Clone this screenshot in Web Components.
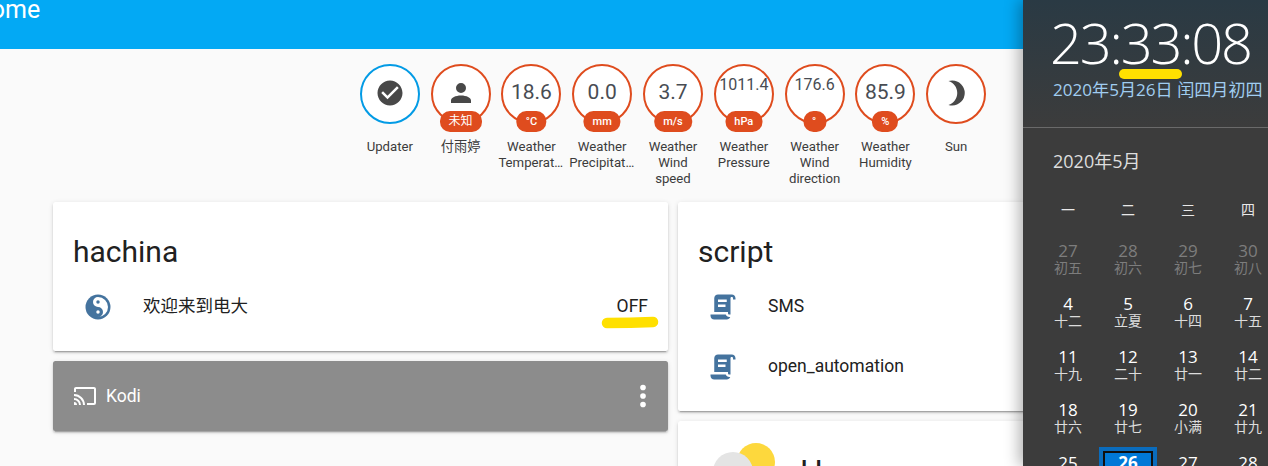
<!DOCTYPE html>
<html lang="zh">
<head>
<meta charset="utf-8">
<title>Home</title>
<style>
html,body{margin:0;padding:0;height:466px;overflow:hidden;background:#fafafa}
</style>
</head>
<body>
<ha-shell>
  <ha-header slot="main">Home</ha-header>
  <ha-badges slot="main">
    <ha-badge color="#039be5" icon="check" label="Updater"></ha-badge>
    <ha-badge icon="account" unit="未知" label="付雨婷"></ha-badge>
    <ha-badge value="18.6" unit="°C" label="Weather Temperature"></ha-badge>
    <ha-badge value="0.0" unit="mm" label="Weather Precipitation"></ha-badge>
    <ha-badge value="3.7" unit="m/s" label="Weather Wind speed"></ha-badge>
    <ha-badge value="1011.4" small unit="hPa" label="Weather Pressure"></ha-badge>
    <ha-badge value="176.6" small unit="°" label="Weather Wind direction"></ha-badge>
    <ha-badge value="85.9" unit="%" label="Weather Humidity"></ha-badge>
    <ha-badge icon="moon" label="Sun"></ha-badge>
  </ha-badges>
  <ha-columns slot="main">
    <div class="col">
      <ha-card heading="hachina">
        <ha-row icon="yin" state="OFF" lift>欢迎来到电大</ha-row>
      </ha-card>
      <ha-media>Kodi</ha-media>
    </div>
    <div class="col">
      <ha-card heading="script">
        <ha-row icon="script">SMS</ha-row>
        <ha-row icon="script">open_automation</ha-row>
      </ha-card>
      <ha-weather>H</ha-weather>
    </div>
  </ha-columns>
  <win-flyout slot="flyout"></win-flyout>
</ha-shell>
<script>
const ICONS={
  check:'M12 2C6.5 2 2 6.5 2 12S6.5 22 12 22 22 17.5 22 12 17.5 2 12 2M10 17L5 12L6.41 10.59L10 14.17L17.59 6.58L19 8L10 17Z',
  account:'M12,4A4,4 0 0,1 16,8A4,4 0 0,1 12,12A4,4 0 0,1 8,8A4,4 0 0,1 12,4M12,14C16.42,14 20,15.79 20,18V20H4V18C4,15.79 7.58,14 12,14Z',
  moon:'M9,2C7.95,2 6.95,2.16 6,2.46C10.06,3.73 13,7.5 13,12C13,16.5 10.06,20.27 6,21.54C6.95,21.84 7.95,22 9,22A10,10 0 0,0 19,12A10,10 0 0,0 9,2Z',
  script:'M17.8,20C17.4,21.2 16.3,22 15,22H5C3.3,22 2,20.7 2,19V18H5L14.2,18C14.6,19.2 15.7,20 17,20H17.8M19,2C20.7,2 22,3.3 22,5V6H20V5C20,4.4 19.6,4 19,4C18.4,4 18,4.4 18,5V18H17C16.4,18 16,17.6 16,17V16H5V5C5,3.3 6.3,2 8,2H19M8,6V8H15V6H8M8,10V12H14V10H8Z',
  cast:'M1,10V12A9,9 0 0,1 10,21H12C12,14.92 7.07,10 1,10M1,14V16A5,5 0 0,1 6,21H8A7,7 0 0,0 1,14M1,18V21H4A3,3 0 0,0 1,18M21,3H3C1.89,3 1,3.89 1,5V8H3V5H21V19H14V21H21A2,2 0 0,0 23,19V5C23,3.89 22.1,3 21,3Z',
  dots:'M12,16A2,2 0 0,1 14,18A2,2 0 0,1 12,20A2,2 0 0,1 10,18A2,2 0 0,1 12,16M12,10A2,2 0 0,1 14,12A2,2 0 0,1 12,14A2,2 0 0,1 10,12A2,2 0 0,1 12,10M12,4A2,2 0 0,1 14,6A2,2 0 0,1 12,8A2,2 0 0,1 10,6A2,2 0 0,1 12,4Z'
};
const FONT='Roboto,"Noto Sans CJK SC",sans-serif';
const FLY='"Open Sans","Noto Sans CJK SC",sans-serif';
const icon=(n,s,c)=>n==='yin'
 ?`<svg width="${s}" height="${s}" viewBox="0 0 24 24"><circle cx="12" cy="12" r="10" fill="${c}"/><path fill="#fff" d="M12 4A8 8 0 0 1 12 20A4 4 0 0 0 12 12A4 4 0 0 1 12 4Z"/><circle cx="12" cy="8" r="1.4" fill="${c}"/><circle cx="12" cy="16" r="1.4" fill="#fff"/></svg>`
 :`<svg width="${s}" height="${s}" viewBox="0 0 24 24"><path fill="${c}" d="${ICONS[n]}"/></svg>`;
class Base extends HTMLElement{
  constructor(){super();this.attachShadow({mode:'open'});}
}
customElements.define('ha-shell',class extends Base{
  connectedCallback(){this.shadowRoot.innerHTML=`<style>
    :host{display:block;position:relative;width:1268px;height:466px;overflow:hidden;font-family:${FONT};background:#fafafa}
    .page{width:1346px}
    </style><div class="page"><slot name="main"></slot></div><slot name="flyout"></slot>`;}
});
customElements.define('ha-header',class extends Base{
  connectedCallback(){this.shadowRoot.innerHTML=`<style>
    :host{display:block;height:49px;background:#03a9f4;color:#fff;overflow:hidden}
    div{margin-left:-27px;font-size:25px;line-height:20px;font-weight:400}
    </style><div><slot></slot></div>`;}
});
customElements.define('ha-badges',class extends Base{
  connectedCallback(){this.shadowRoot.innerHTML=`<style>
    :host{display:flex;justify-content:center;box-sizing:border-box;height:153px;padding-top:15px}
    </style><slot></slot>`;}
});
customElements.define('ha-badge',class extends Base{
  connectedCallback(){
    const c=this.getAttribute('color')||'#df4c1e';
    const ic=this.getAttribute('icon'),v=this.getAttribute('value'),u=this.getAttribute('unit'),l=this.getAttribute('label');
    const small=this.hasAttribute('small');
    const cjk=u&&/[\u4e00-\u9fff]/.test(u);
    this.shadowRoot.innerHTML=`<style>
    :host{display:flex;flex-direction:column;align-items:center;width:70.8px;flex:none}
    .c{position:relative;box-sizing:border-box;width:60px;height:60px;border:2.5px solid ${c};border-radius:50%;display:flex;align-items:center;justify-content:center;color:#484c53;background:#fff}
    .v{font-size:21px;line-height:1;margin-top:-4px}
    .v.s{font-size:16px;margin-top:-18px}
    svg{display:block;margin-top:-2px}
    .p{position:absolute;bottom:-10px;left:50%;transform:translateX(-50%);height:21px;line-height:21px;min-width:5px;padding:0 9px;border-radius:10px;background:${c};color:#fff;font-size:${cjk?12:11}px;font-weight:${cjk?400:500};white-space:nowrap}
    .l{margin-top:15px;width:66px;text-align:center;font-size:13.2px;line-height:16px;color:#3c3c3c;overflow:hidden;text-overflow:ellipsis}
    </style><div class="c">${ic?icon(ic,30,'#484848'):`<span class="v${small?' s':''}">${v}</span>`}${u?`<span class="p">${u}</span>`:''}</div><div class="l">${l}</div>`;
  }
});
customElements.define('ha-columns',class extends Base{
  connectedCallback(){this.shadowRoot.innerHTML=`<style>
    :host{display:grid;grid-template-columns:615px 615px;gap:10px;padding:0 53px}
    ::slotted(.col){display:flex;flex-direction:column;gap:10px;min-width:0}
    </style><slot></slot>`;}
});
const cardStyle=`background:#fff;border-radius:2.5px;box-shadow:0 2px 2px rgba(0,0,0,.14),0 1px 5px rgba(0,0,0,.12),0 3px 1px -2px rgba(0,0,0,.2);`;
customElements.define('ha-card',class extends Base{
  connectedCallback(){this.shadowRoot.innerHTML=`<style>
    :host{display:block;${cardStyle}padding-bottom:10px;color:#212121}
    h2{margin:0;box-sizing:border-box;height:79px;padding:30px 20px 0;font-size:30px;line-height:40px;font-weight:400;color:#212121}
    </style><h2>${this.getAttribute('heading')}</h2><slot></slot>`;}
});
customElements.define('hl-mark',class extends Base{
  connectedCallback(){
    const w=+this.getAttribute('w'),h=+this.getAttribute('h');
    this.shadowRoot.innerHTML=`<style>
    :host{display:block;position:absolute;left:var(--x);top:var(--y);width:${w}px;height:${h}px}
    svg{display:block}
    </style><svg width="${w}" height="${h}" viewBox="0 0 ${w} ${h}"><path d="${this.getAttribute('d')}" fill="none" stroke="#ffe000" stroke-width="${this.getAttribute('sw')}" stroke-linecap="round"/></svg>`;
  }
});
customElements.define('ha-row',class extends Base{
  connectedCallback(){
    const s=this.getAttribute('state');
    this.shadowRoot.innerHTML=`<style>
    :host{display:flex;align-items:center;height:50px;margin-bottom:10px;padding:0 20px;font-size:17.5px;color:#212121}
    .i{width:50px;display:flex;justify-content:center;flex:none;margin-top:2px}
    .t{margin-left:20px;flex:1;white-space:nowrap}
    .t.lift{padding-bottom:3px}
    .s{position:relative}
    hl-mark{--x:-16px;--y:20px}
    </style><div class="i">${icon(this.getAttribute('icon'),30,'#44739e')}</div><div class="t${this.hasAttribute('lift')?' lift':''}"><slot></slot></div>${s?`<div class="s">${s}<hl-mark w="58" h="13" sw="10.5" d="M6 7Q30 7 52 6"></hl-mark></div>`:''}`;
  }
});
customElements.define('ha-media',class extends Base{
  connectedCallback(){this.shadowRoot.innerHTML=`<style>
    :host{display:flex;align-items:center;height:70px;padding:0 8px 0 20px;${cardStyle}background:#8c8c8c;color:#fff;font-size:17.5px}
    .t{margin-left:9px;flex:1}
    svg{display:block}
    </style>${icon('cast',24,'#fff')}<div class="t"><slot></slot></div>${icon('dots',34,'#fff')}`;}
});
customElements.define('ha-weather',class extends Base{
  connectedCallback(){this.shadowRoot.innerHTML=`<style>
    :host{display:flex;align-items:flex-start;height:100px;padding:20px 0 0 32px;${cardStyle}color:#212121;font-size:32px;line-height:40px}
    svg{display:block;flex:none}
    .t{margin-left:22px;padding-top:10px}
    </style><svg width="68" height="50" viewBox="0 0 68 50"><circle cx="46" cy="21" r="19" fill="#fdd83d"/><circle cx="23" cy="31" r="20" fill="#e4e4e4"/></svg><div class="t"><slot></slot></div>`;}
});
const rows=[
 [['27','初五',1],['28','初六',1],['29','初七',1],['30','初八',1]],
 [['4','十二'],['5','立夏'],['6','十四'],['7','十五']],
 [['11','十九'],['12','二十'],['13','廿一'],['14','廿二']],
 [['18','廿六'],['19','廿七'],['20','小满'],['21','廿九']],
 [['25','初三'],['26','初四',2],['27','初五'],['28','初六']]
];
customElements.define('win-clock',class extends Base{
  connectedCallback(){this.shadowRoot.innerHTML=`<style>
    :host{display:block;box-sizing:border-box;height:128px;padding:0 0 0 30px;border-bottom:1px solid #6a6a6a;position:relative;font-family:${FLY}}
    .time{margin-left:-3px;font-size:56px;font-weight:300;line-height:62px;padding-top:11px;color:#fff;letter-spacing:-2.2px;white-space:nowrap;height:68px;box-sizing:border-box}
    .date{font-size:17.1px;line-height:24px;margin-top:10px;color:#a0cdf0;white-space:nowrap}
    hl-mark{--x:94px;--y:66px}
    </style><div class="time">23:33:08</div><div class="date">2020年5月26日 闰四月初四</div><hl-mark w="68" h="14" sw="10" d="M7 8H60"></hl-mark>`;}
});
customElements.define('win-calendar',class extends Base{
  connectedCallback(){
    const cells=rows.flat().map(([n,l,k])=>`<div class="cell${k===1?' off':''}${k===2?' now':''}"><span class="n">${n}</span><span class="m">${l}</span></div>`).join('');
    this.shadowRoot.innerHTML=`<style>
    :host{display:block;font-family:${FLY};color:#fff}
    .h{padding:21px 0 0 30px;font-size:18px;line-height:24px;color:#dedede}
    .w{display:grid;grid-template-columns:repeat(4,60px);padding:0 0 0 15px;margin-top:27px;text-align:center;font-size:14px;line-height:20px;color:#e8e8e8}
    .g{display:grid;grid-template-columns:repeat(4,60px);grid-auto-rows:53px;padding:15px 0 0 15px;text-align:center}
    .cell{display:flex;flex-direction:column;align-items:center;padding-top:6px;box-sizing:border-box}
    .n{font-size:17px;line-height:20px}
    .m{font-size:14px;line-height:14px;color:#dcdcdc}
    .off .n,.off .m{color:#7d7d7d}
    .now{margin:0 1px;background:#0078d7;box-shadow:inset 0 0 0 4px #0a6cbd,inset 0 0 0 6px #101010}
    .now .n{font-weight:700}
    </style><div class="h">2020年5月</div><div class="w"><span>一</span><span>二</span><span>三</span><span>四</span></div><div class="g">${cells}</div>`;
  }
});
customElements.define('win-flyout',class extends Base{
  connectedCallback(){this.shadowRoot.innerHTML=`<style>
    :host{display:block;position:absolute;top:0;right:0;width:245px;height:466px;overflow:hidden;background:linear-gradient(#2a3a44 0,#3c3c3c 128px);background-color:#3c3c3c;box-shadow:-4px 0 14px rgba(0,0,0,.3)}
    </style><win-clock></win-clock><win-calendar></win-calendar>`;}
});
</script>
</body>
</html>
